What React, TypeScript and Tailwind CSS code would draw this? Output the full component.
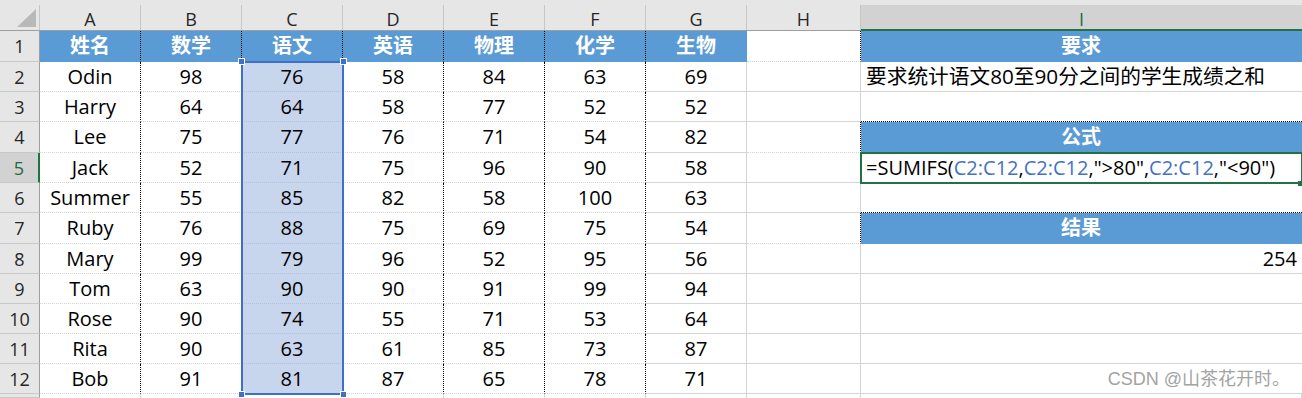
import * as React from "react";

const COLS = ["A", "B", "C", "D", "E", "F", "G", "H", "I"];
const HEAD = ["姓名", "数学", "语文", "英语", "物理", "化学", "生物"];

const DATA: (string | number)[][] = [
  ["Odin", 98, 76, 58, 84, 63, 69],
  ["Harry", 64, 64, 58, 77, 52, 52],
  ["Lee", 75, 77, 76, 71, 54, 82],
  ["Jack", 52, 71, 75, 96, 90, 58],
  ["Summer", 55, 85, 82, 58, 100, 63],
  ["Ruby", 76, 88, 75, 69, 75, 54],
  ["Mary", 99, 79, 96, 52, 95, 56],
  ["Tom", 63, 90, 90, 91, 99, 94],
  ["Rose", 90, 74, 55, 71, 53, 64],
  ["Rita", 90, 63, 61, 85, 73, 87],
  ["Bob", 91, 81, 87, 65, 78, 71],
];

const Ref = ({ children }: { children: React.ReactNode }) => (
  <span className="text-[#4472c4]">{children}</span>
);

const BlueHead = ({ label, last }: { label: string; last?: boolean }) => (
  <div
    className={`flex items-center justify-center bg-[#5b9bd5] border-b border-b-[#5b9bd5] text-[20px] font-bold text-white ${
      last ? "border-r border-r-[#5b9bd5]" : "border-r border-dotted border-r-black"
    }`}
  >
    {label}
  </div>
);

const RowHeader = ({ n }: { n: number | string }) =>
  n === 5 ? (
    <div className="flex items-center justify-center bg-[#d2d2d2] border-b border-b-[#c9c9c9] border-r-2 border-r-[#217346] text-[18px] text-[#1e6b41]">
      {n}
    </div>
  ) : (
    <div className="flex items-center justify-center bg-[#e6e6e6] border-b border-b-[#c9c9c9] border-r border-r-[#9e9e9e] text-[18px] text-[#262626]">
      {n}
    </div>
  );

const App = () => {
  const cells: React.ReactNode[] = [];

  // column headers
  cells.push(
    <div key="corner" className="bg-[#e6e6e6] border-b border-b-[#9e9e9e] pt-[5px]">
      <div className="h-full border-r border-r-[#c6c6c6]">
        <svg width="39" height="25" viewBox="0 0 39 25">
          <polygon points="17,22 36,22 36,4" fill="#b9b9b9" />
        </svg>
      </div>
    </div>
  );
  COLS.forEach((c) =>
    cells.push(
      c === "I" ? (
        <div key={c} className="bg-[#e6e6e6] border-b-2 border-b-[#217346] pt-[5px]">
          <div className="flex h-full items-center justify-center bg-[#d2d2d2] pt-[3px] text-[18px] text-[#1e6b41]">
            {c}
          </div>
        </div>
      ) : (
        <div key={c} className="bg-[#e6e6e6] border-b border-b-[#9e9e9e] pt-[5px]">
          <div className="flex h-full items-center justify-center border-r border-r-[#c6c6c6] pt-[3px] text-[18px] text-[#262626]">
            {c}
          </div>
        </div>
      )
    )
  );

  // row 1
  cells.push(<RowHeader key="r1" n={1} />);
  HEAD.forEach((h, i) => cells.push(<BlueHead key={"h" + i} label={h} last={i === 6} />));
  cells.push(<div key="h1" className="border-r border-dotted border-r-black border-b border-b-[#d4d4d4]" />);
  cells.push(<BlueHead key="i1" label="要求" last />);

  // rows 2-12
  DATA.forEach((row, ri) => {
    const r = ri + 2;
    cells.push(<RowHeader key={"r" + r} n={r} />);
    row.forEach((v, ci) => {
      const base = "flex items-center justify-center text-[20px] text-black";
      const sel = ci === 2 ? "bg-[#c7d5ed] border-b border-b-[#b3c2dc]" : "bg-white border-b border-b-[#d4d4d4]";
      const right = ci < 6 ? "border-r border-dotted border-r-black" : "border-r border-r-[#d4d4d4]";
      cells.push(
        <div key={r + "-" + ci} className={`${base} ${sel} ${right}`}>
          {v}
        </div>
      );
    });
    const hDotted = r === 4 || r === 7;
    cells.push(
      <div
        key={"h" + r}
        className={`border-b border-b-[#d4d4d4] ${
          hDotted ? "border-r border-dotted border-r-black" : "border-r border-r-[#d4d4d4]"
        }`}
      />
    );
    if (r === 2) {
      cells.push(
        <div key="i2" className="flex items-center border-b border-b-[#d4d4d4] pl-[5px] text-[20.7px] text-black">
          要求统计语文80至90分之间的学生成绩之和
        </div>
      );
    } else if (r === 3 || r === 6) {
      cells.push(<div key={"i" + r} className="border-b border-dotted border-b-black" />);
    } else if (r === 4) {
      cells.push(<BlueHead key="i4" label="公式" last />);
    } else if (r === 7) {
      cells.push(<BlueHead key="i7" label="结果" last />);
    } else if (r === 5) {
      cells.push(
        <div key="i5" className="relative flex items-center border-b border-b-[#d4d4d4] pl-[5px] text-[20px] text-black">
          <span>
            =SUMIFS(<Ref>C2:C12</Ref>,<Ref>C2:C12</Ref>,"&gt;80",<Ref>C2:C12</Ref>,"&lt;90")
          </span>
          <div className="absolute -left-px -top-px -right-px -bottom-[2px] border-2 border-[#217346]" />
          <div className="absolute -right-[1px] -bottom-[4px] h-[5px] w-[5px] bg-[#217346]" />
        </div>
      );
    } else if (r === 8) {
      cells.push(
        <div key="i8" className="flex items-center justify-end border-b border-b-[#d4d4d4] pr-[5px] text-[20px] text-black">
          254
        </div>
      );
    } else {
      cells.push(<div key={"i" + r} className="border-b border-b-[#d4d4d4]" />);
    }
  });

  // partial row 13
  cells.push(<RowHeader key="r13" n="" />);
  COLS.forEach((c) => cells.push(<div key={"x" + c} className="border-r border-r-[#d4d4d4]" />));

  return (
    <div className="relative h-[398px] w-[1302px] overflow-hidden bg-white font-['Open_Sans','Noto_Sans_CJK_SC',sans-serif] leading-none">
      <div className="grid grid-cols-[40px_101px_101px_101px_101px_101px_101px_101px_114px_441px] grid-rows-[31px_31px_30px_30px_31px_30px_30px_31px_30px_30px_30px_30px_30px_4px]">
        {cells}
      </div>

      {/* formula reference highlight on C2:C12 */}
      <div className="absolute left-[241px] top-[61px] h-[334px] w-[103px] border-2 border-[#3c6fce]">
        <div className="absolute -left-[5px] -top-[5px] h-[7px] w-[7px] border border-white bg-[#3c6fce]" />
        <div className="absolute -right-[5px] -top-[5px] h-[7px] w-[7px] border border-white bg-[#3c6fce]" />
        <div className="absolute -left-[5px] -bottom-[5px] h-[7px] w-[7px] border border-white bg-[#3c6fce]" />
        <div className="absolute -right-[5px] -bottom-[5px] h-[7px] w-[7px] border border-white bg-[#3c6fce]" />
      </div>

      <div className="absolute right-[12px] top-[370px] font-['Liberation_Sans','Noto_Sans_CJK_SC',sans-serif] text-[18px] leading-none text-[#a3a3a3]">
        CSDN @山茶花开时。
      </div>
    </div>
  );
};

export default App;
